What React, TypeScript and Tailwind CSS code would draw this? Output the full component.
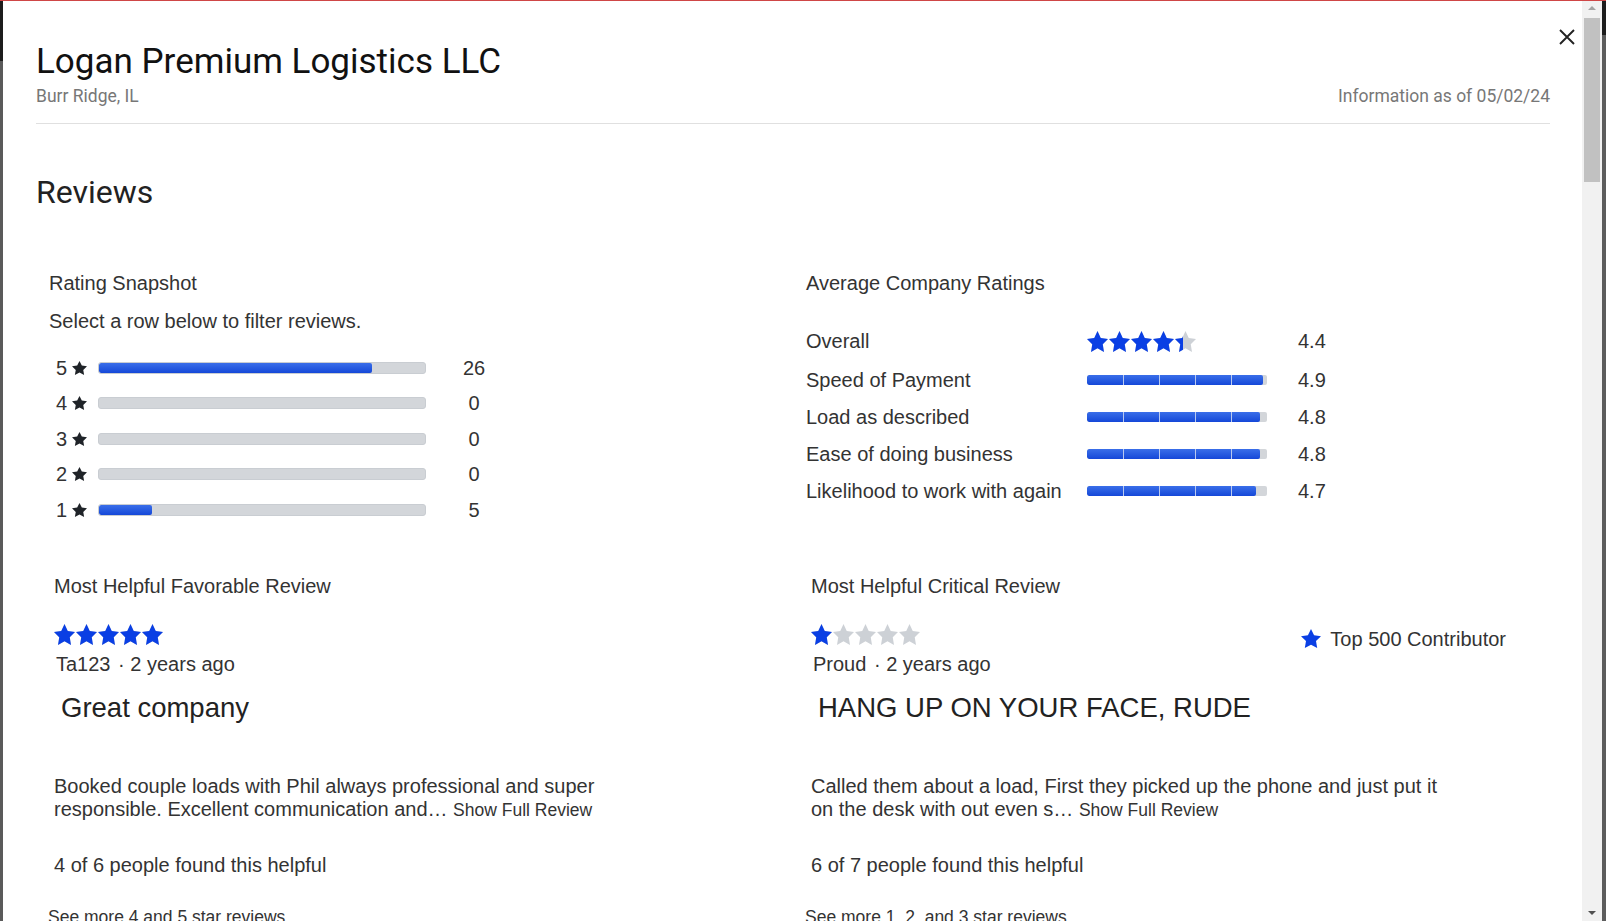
import React from "react";

const STAR_PATH =
  "M12 2l3.09 6.26L22 9.27l-5 4.87 1.18 6.88L12 17.77l-6.18 3.25L7 14.14 2 9.27l6.91-1.01L12 2z";

function StarIcon({ className, w = 21, h = 21 }: { className?: string; w?: number; h?: number }) {
  return (
    <svg viewBox="2 2 20 19.1" width={w} height={h} className={className} preserveAspectRatio="none">
      <path d={STAR_PATH} fill="currentColor" />
    </svg>
  );
}

function StarRow({ value }: { value: number }) {
  const stars = [0, 1, 2, 3, 4];
  return (
    <div className="flex gap-[1px] h-[22px] items-center">
      {stars.map((i) => {
        const frac = Math.max(0, Math.min(1, value - i));
        return (
          <div key={i} className="relative w-[21px] h-[21px]">
            <StarIcon className="absolute left-0 top-0 text-[#cdd1d6]" />
            <div className="absolute left-0 top-0 h-[21px] overflow-hidden" style={{ width: `${frac * 100}%` }}>
              <StarIcon className="text-[#0a3fe4]" />
            </div>
          </div>
        );
      })}
    </div>
  );
}

const snapshot = [
  { star: 5, count: 26 },
  { star: 4, count: 0 },
  { star: 3, count: 0 },
  { star: 2, count: 0 },
  { star: 1, count: 5 },
];
const total = 31;

const averages = [
  { label: "Speed of Payment", value: 4.9 },
  { label: "Load as described", value: 4.8 },
  { label: "Ease of doing business", value: 4.8 },
  { label: "Likelihood to work with again", value: 4.7 },
];

function SegBar({ value }: { value: number }) {
  return (
    <div className="relative w-[180px] h-[10px] rounded-[2px] bg-[#d3d6da] overflow-hidden">
      <div
        className="absolute left-0 top-0 h-full rounded-[2px] bg-gradient-to-b from-[#3a6ee9] to-[#1547d8]"
        style={{ width: `${(value / 5) * 100}%` }}
      />
      <div className="absolute top-0 h-full w-px bg-[#b9c9ef] left-[36px]" />
      <div className="absolute top-0 h-full w-px bg-[#b9c9ef] left-[72px]" />
      <div className="absolute top-0 h-full w-px bg-[#b9c9ef] left-[108px]" />
      <div className="absolute top-0 h-full w-px bg-[#b9c9ef] left-[144px]" />
    </div>
  );
}

function ReviewCard({
  heading,
  rating,
  name,
  title,
  body,
  helpful,
  more,
  contributor,
}: {
  heading: string;
  rating: number;
  name: string;
  title: string;
  body: string;
  helpful: string;
  more: string;
  contributor?: boolean;
}) {
  return (
    <div className="pl-[18px] text-[#333]">
      <div className="text-[20px] leading-[24px]">{heading}</div>
      <div className="flex justify-between items-start mt-[26px] pr-[44px]">
        <div>
          <StarRow value={rating} />
          <div className="text-[20px] leading-[24px] mt-[6px] pl-[2px]">
            {name} <span className="ml-[2px]">·</span> 2 years ago
          </div>
        </div>
        {contributor && (
          <div className="flex items-center mt-[3px] text-[20px] leading-[24px]">
            <StarIcon className="text-[#0a3fe4]" w={20} h={19} />
            <span className="ml-[9px]">Top 500 Contributor</span>
          </div>
        )}
      </div>
      <div className="text-[27.5px] leading-[32px] mt-[16px] pl-[7px] text-[#222]">{title}</div>
      <div className="mt-[51px] w-[640px] text-[20px] leading-[23px]">
        {body} <span className="text-[17.5px] leading-[20px]">Show Full Review</span>
      </div>
      <div className="mt-[32px] text-[20px] leading-[24px]">{helpful}</div>
      <div className="mt-[28px] -ml-[6px] text-[17.5px] leading-[24px]">{more}</div>
    </div>
  );
}

export default function App() {
  return (
    <div className="w-[1606px] h-[921px] overflow-hidden bg-white flex flex-col [font-family:'Liberation_Sans',Arial,sans-serif]">
      <div className="h-px bg-[#cf4646] shrink-0" />
      <div className="flex flex-1 min-h-0">
        {/* left backdrop strip */}
        <div className="w-[3px] flex flex-col shrink-0">
          <div className="h-[60px] bg-[#1d1d1d]" />
          <div className="flex-1 bg-[#5a5a5a]" />
        </div>

        {/* modal */}
        <div className="relative flex-1 pl-[33px] pr-[32px]">
          <button className="absolute top-[28px] right-[7px] w-[16px] h-[16px]">
            <svg viewBox="0 0 16 16" width="16" height="16">
              <path d="M1 1L15 15M15 1L1 15" stroke="#222" strokeWidth="1.9" />
            </svg>
          </button>

          <div className="[font-family:Roboto,sans-serif]">
            <h1 className="pt-[39px] text-[35px] leading-[44px] text-[#111]">Logan Premium Logistics LLC</h1>
            <div className="flex justify-between items-end text-[17.5px] leading-[24px] text-[#777]">
              <span>Burr Ridge, IL</span>
              <span>Information as of 05/02/24</span>
            </div>
            <div className="h-px bg-[#e0e0e0] mt-[15px]" />
            <h2 className="mt-[49px] text-[32px] leading-[38px] text-[#222]">Reviews</h2>
          </div>

          <div className="grid grid-cols-2 mt-[60px] text-[#333]">
            {/* Rating snapshot */}
            <div className="pl-[13px]">
              <div className="text-[20px] leading-[24px]">Rating Snapshot</div>
              <div className="mt-[14px] text-[20px] leading-[24px]">Select a row below to filter reviews.</div>
              <div className="mt-[17px]">
                {snapshot.map((r) => (
                  <div key={r.star} className="flex items-center h-[35.5px]">
                    <span className="pl-[7px] w-[18px] text-[20px] leading-[24px]">{r.star}</span>
                    <StarIcon className="ml-[5px] text-[#1f2328]" w={15} h={14} />
                    <div className="ml-[11px] relative w-[328px] h-[12px] rounded-[3px] bg-[#d3d6da] border border-[#c9cdd2] overflow-hidden">
                      <div
                        className="absolute left-0 top-0 h-full bg-gradient-to-b from-[#3a6ee9] to-[#1547d8] rounded-[2px]"
                        style={{ width: `${(r.count / total) * 100}%` }}
                      />
                    </div>
                    <span className="ml-[28px] w-[40px] text-center text-[20px] leading-[24px]">{r.count}</span>
                  </div>
                ))}
              </div>
            </div>

            {/* Average ratings */}
            <div className="pl-[13px]">
              <div className="text-[20px] leading-[24px]">Average Company Ratings</div>
              <div className="mt-[26px]">
                <div className="flex items-center h-[40px]">
                  <span className="w-[281px] text-[20px] leading-[24px]">Overall</span>
                  <div className="w-[180px]">
                    <StarRow value={4.4} />
                  </div>
                  <span className="ml-[31px] text-[20px] leading-[24px]">4.4</span>
                </div>
                {averages.map((a) => (
                  <div key={a.label} className="flex items-center h-[37px]">
                    <span className="w-[281px] text-[20px] leading-[24px]">{a.label}</span>
                    <SegBar value={a.value} />
                    <span className="ml-[31px] text-[20px] leading-[24px]">{a.value.toFixed(1)}</span>
                  </div>
                ))}
              </div>
            </div>
          </div>

          <div className="grid grid-cols-2 mt-[46px]">
            <ReviewCard
              heading="Most Helpful Favorable Review"
              rating={5}
              name="Ta123"
              title="Great company"
              body="Booked couple loads with Phil always professional and super responsible. Excellent communication and…"
              helpful="4 of 6 people found this helpful"
              more="See more 4 and 5 star reviews"
            />
            <ReviewCard
              heading="Most Helpful Critical Review"
              rating={1}
              name="Proud"
              title="HANG UP ON YOUR FACE, RUDE"
              body="Called them about a load, First they picked up the phone and just put it on the desk with out even s…"
              helpful="6 of 7 people found this helpful"
              more="See more 1, 2, and 3 star reviews"
              contributor
            />
          </div>
        </div>

        {/* scrollbar */}
        <div className="relative w-[20px] bg-[#f1f1f1] shrink-0">
          <div className="absolute left-[6px] top-[5px] w-0 h-0 border-l-[4px] border-r-[4px] border-b-[4px] border-l-transparent border-r-transparent border-b-[#a3a3a3]" />
          <div className="absolute left-[2px] right-[2px] top-[17px] h-[164px] bg-[#c1c1c1]" />
          <div className="absolute left-[6px] bottom-[6px] w-0 h-0 border-l-[4px] border-r-[4px] border-t-[4px] border-l-transparent border-r-transparent border-t-[#505050]" />
        </div>

        {/* right backdrop strip */}
        <div className="w-[4px] flex flex-col shrink-0">
          <div className="h-[34px] bg-[#1d1d1d]" />
          <div className="flex-1 bg-[#5c5c5c]" />
        </div>
      </div>
    </div>
  );
}
